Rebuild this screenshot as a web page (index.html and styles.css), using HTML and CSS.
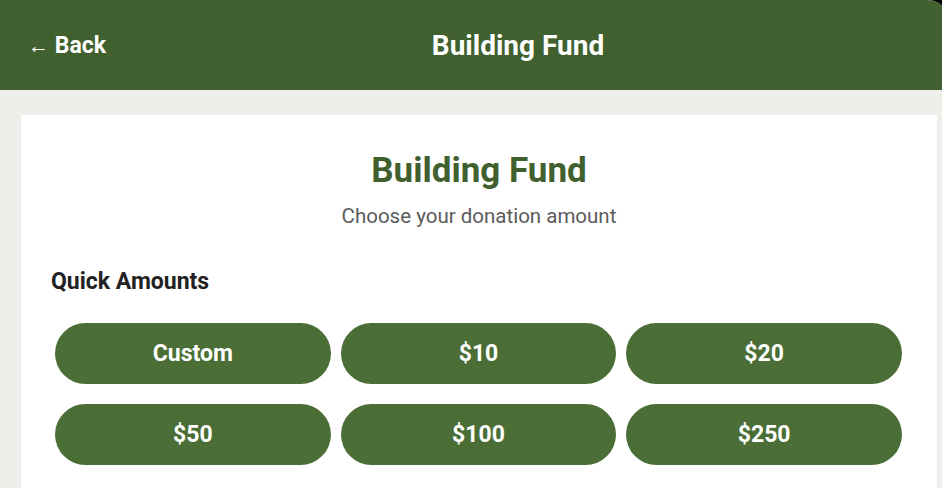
FILE: index.html
```html
<!DOCTYPE html>
<html lang="en">
<head>
<meta charset="utf-8">
<title>Building Fund</title>
<link rel="stylesheet" href="styles.css">
</head>
<body>
<div class="screen">
  <header class="topbar">
    <a class="back" href="#"><span class="arrow">←</span> Back</a>
    <h1 class="topbar-title">Building Fund</h1>
  </header>
  <main class="card">
    <h2 class="card-title">Building Fund</h2>
    <p class="card-subtitle">Choose your donation amount</p>
    <h3 class="section-title">Quick Amounts</h3>
    <div class="amounts">
      <button class="amount">Custom</button>
      <button class="amount">$10</button>
      <button class="amount">$20</button>
      <button class="amount">$50</button>
      <button class="amount">$100</button>
      <button class="amount">$250</button>
    </div>
  </main>
</div>
</body>
</html>
```

FILE: styles.css
```css
html, body {
  margin: 0;
  padding: 0;
  background: #000;
  width: 942px;
  height: 488px;
  overflow: hidden;
}

.screen {
  width: 942px;
  height: 488px;
  background: #eeefea;
  border-top-right-radius: 16px 8px;
  overflow: hidden;
  font-family: Roboto, "Liberation Sans", sans-serif;
}

.topbar {
  height: 90px;
  background: #41602f;
  display: flex;
  align-items: center;
  padding: 0 12px 0 28px;
  box-sizing: border-box;
}

.back {
  color: #fff;
  text-decoration: none;
  font-size: 23px;
  font-weight: 700;
  white-space: nowrap;
}

.arrow {
  font-weight: 400;
  font-size: 21px;
}

.topbar-title {
  flex: 1;
  margin: 0;
  text-align: center;
  color: #fff;
  font-size: 28px;
  font-weight: 700;
}

.card {
  background: #fff;
  margin: 25px 5px 0 21px;
  padding: 35px 30px 40px;
  height: 400px;
  box-sizing: border-box;
}

.card-title {
  margin: 0;
  text-align: center;
  color: #41602f;
  font-size: 35px;
  line-height: 41px;
  font-weight: 700;
}

.card-subtitle {
  margin: 13px 0 0;
  text-align: center;
  color: #5b5b5b;
  font-size: 20.5px;
  line-height: 24px;
}

.section-title {
  margin: 40px 0 0;
  color: #222;
  font-size: 23px;
  line-height: 27px;
  font-weight: 700;
}

.amounts {
  display: grid;
  grid-template-columns: repeat(3, 1fr);
  column-gap: 10px;
  row-gap: 20px;
  margin: 28px 5px 0 4px;
}

.amount {
  height: 61px;
  border: none;
  border-radius: 31px;
  background: #4a6e35;
  color: #fff;
  font-family: Roboto, "Liberation Sans", sans-serif;
  font-size: 23px;
  font-weight: 700;
  padding: 0;
}
```
